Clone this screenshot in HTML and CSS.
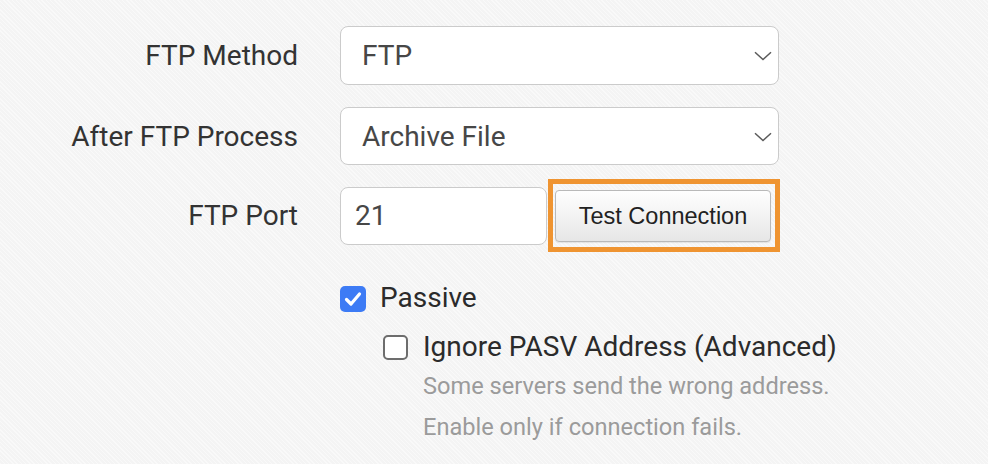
FILE: index.html
```html
<!DOCTYPE html>
<html>
<head>
<meta charset="utf-8">
<link rel="stylesheet" href="styles.css">
</head>
<body>
<div class="form">
  <div class="row row-select">
    <label class="label">FTP Method</label>
    <div class="select">
      <span class="select-text">FTP</span>
      <svg class="chev" width="18" height="10" viewBox="0 0 18 10"><path d="M1 1.2 L9 8.6 L17 1.2" fill="none" stroke="#5a5a5a" stroke-width="1.5"/></svg>
    </div>
  </div>
  <div class="row row-select row-second">
    <label class="label">After FTP Process</label>
    <div class="select">
      <span class="select-text">Archive File</span>
      <svg class="chev" width="18" height="10" viewBox="0 0 18 10"><path d="M1 1.2 L9 8.6 L17 1.2" fill="none" stroke="#5a5a5a" stroke-width="1.5"/></svg>
    </div>
  </div>
  <div class="row row-port">
    <label class="label">FTP Port</label>
    <div class="input">21</div>
    <div class="highlight">
      <button class="btn" type="button">Test Connection</button>
    </div>
  </div>
  <div class="check-row passive">
    <span class="cb cb-on"><svg width="18" height="16" viewBox="0 0 18 16"><path d="M2.5 8.5 L7 13 L15.5 3" fill="none" stroke="#fff" stroke-width="3.2" stroke-linecap="round" stroke-linejoin="round"/></svg></span>
    <span class="check-label">Passive</span>
  </div>
  <div class="check-row ignore">
    <span class="cb cb-off"></span>
    <span class="check-label">Ignore PASV Address (Advanced)</span>
  </div>
  <div class="help">
    <p class="help-line">Some servers send the wrong address.</p>
    <p class="help-line">Enable only if connection fails.</p>
  </div>
</div>
</body>
</html>
```

FILE: styles.css
```css
html, body {
  margin: 0;
  padding: 0;
}
body {
  width: 988px;
  height: 464px;
  overflow: hidden;
  background-color: #f7f7f7;
  background-image: repeating-linear-gradient(45deg, #f9f9f9 0px, #f9f9f9 1px, #f4f4f4 1px, #f4f4f4 3px);
  font-family: Roboto, "Liberation Sans", Arial, sans-serif;
  color: #333;
}
.form {
  padding-top: 26px;
}
.row {
  display: flex;
  align-items: center;
}
.label {
  width: 298px;
  margin-right: 42px;
  text-align: right;
  font-size: 28px;
  color: #333;
  flex: none;
}
.select {
  box-sizing: border-box;
  width: 439px;
  height: 59px;
  background: #fff;
  border: 1.5px solid #cbcbcb;
  border-radius: 8px;
  display: flex;
  align-items: center;
  justify-content: space-between;
  padding: 0 6px 0 21px;
}
.row-second {
  margin-top: 22px;
}
.row-second .select {
  height: 58px;
}
.select-text {
  font-size: 28px;
  color: #474747;
}
.chev {
  display: block;
  margin-top: 1px;
}
.row-port {
  margin-top: 14px;
}
.input {
  box-sizing: border-box;
  width: 207px;
  height: 58px;
  background: #fff;
  border: 1.5px solid #cbcbcb;
  border-radius: 8px;
  padding-left: 14px;
  font-size: 28px;
  color: #474747;
  display: flex;
  align-items: center;
  flex: none;
}
.highlight {
  box-sizing: border-box;
  margin-left: 1px;
  border: 5px solid #ef9431;
  padding: 6px 4px 5px 2px;
  display: flex;
}
.btn {
  box-sizing: border-box;
  width: 216px;
  height: 52px;
  margin: 0;
  padding: 0;
  border: 1px solid #b9b9b9;
  border-radius: 4px;
  background: linear-gradient(#fefefe, #f3f3f3 50%, #e6e6e6);
  box-shadow: 0 1px 1px rgba(0, 0, 0, 0.08);
  font-family: "Liberation Sans", Arial, sans-serif;
  font-size: 23.5px;
  color: #222;
  text-align: center;
}
.check-row {
  display: flex;
  align-items: center;
  height: 34px;
}
.passive {
  margin-top: 28px;
  padding-left: 340px;
}
.ignore {
  margin-top: 15px;
  padding-left: 383px;
}
.cb {
  box-sizing: border-box;
  flex: none;
  display: flex;
  align-items: center;
  justify-content: center;
  border-radius: 5px;
}
.cb-on {
  width: 26px;
  height: 26px;
  background: #3d7bf5;
  margin-top: 4px;
}
.cb-off {
  width: 25px;
  height: 25px;
  border: 2px solid #6d6d6d;
  background: #fff;
  margin-top: 2px;
}
.check-label {
  font-size: 28px;
  color: #2b2b2b;
}
.passive .check-label {
  margin-left: 14px;
}
.ignore .check-label {
  margin-left: 15px;
}
.help {
  margin-top: 3px;
  padding-left: 423px;
}
.help-line {
  margin: 0;
  font-size: 23.6px;
  line-height: 41px;
  color: #9b9b9b;
}
```
